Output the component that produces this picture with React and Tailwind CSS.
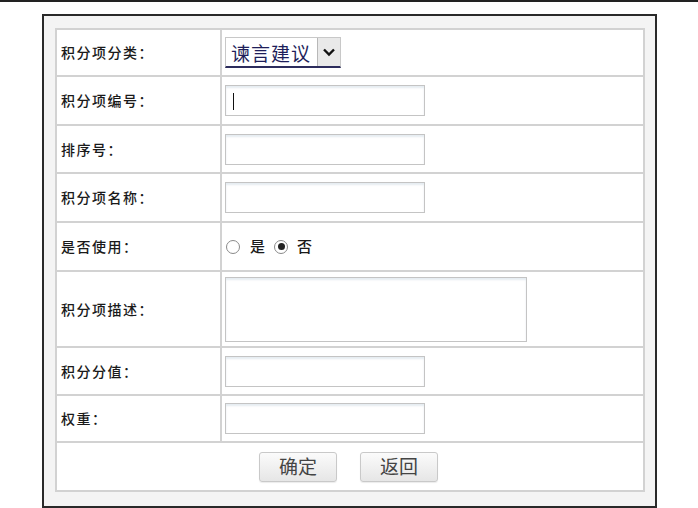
import React from "react";

const font = { fontFamily: '"Noto Sans CJK SC", "Noto Sans", sans-serif' };

function Input({ caret }) {
  return (
    <div className="relative w-[200px] h-[31px] border border-[#c4c4c4] bg-white shadow-[inset_0_2px_2px_rgba(150,180,200,0.25)]">
      {caret && <div className="absolute left-[7px] top-[7px] w-px h-[17px] bg-[#111]" />}
    </div>
  );
}

function Row({ label, h, children, last }) {
  return (
    <div className={`flex ${h} ${last ? "" : "border-b-2 border-[#d2d2d2]"}`}>
      <div className="w-[165px] shrink-0 flex items-center pl-[4px] border-r-2 border-[#d2d2d2] text-[14px] font-medium text-[#1a1a1a] tracking-[1.5px]">
        {label}
      </div>
      <div className="flex-1 flex items-center pl-[3px]">{children}</div>
    </div>
  );
}

function Radio({ checked }) {
  return (
    <div className="w-[14px] h-[14px] rounded-full border border-[#8a8a8a] bg-white flex items-center justify-center">
      {checked && <div className="w-[7px] h-[7px] rounded-full bg-[#222]" />}
    </div>
  );
}

function Btn({ children }) {
  return (
    <div className="w-[78px] h-[30px] rounded-[3px] border border-[#c9c9c9] bg-gradient-to-b from-[#fbfbfb] to-[#e6e6e6] flex items-center justify-center text-[19px] text-[#444] shadow-[0_1px_1px_rgba(0,0,0,0.08)]">
      {children}
    </div>
  );
}

export default function App() {
  return (
    <div className="w-[698px] h-[508px] bg-white relative overflow-hidden" style={font}>
      <div className="h-[2px] bg-[#222]" />
      <div className="ml-[42px] mt-[12px] w-[615px] h-[494px] border-2 border-[#2a2a2a] bg-[#f4f4f4] pl-[11px] pt-[12px]">
        <div className="w-[590px] border-2 border-[#d2d2d2] bg-white">
          <Row label="积分项分类：" h="h-[47px]">
            <div className="flex items-stretch h-[31px] w-[116px] border border-[#c8c8c8] border-b-[2px] border-b-[#2c2c5c] bg-white">
              <div className="flex-1 flex items-center pl-[5px] text-[19px] text-[#1e1e5a] tracking-[1px] leading-none">谏言建议</div>
              <div className="w-[23px] bg-[#e9e9e9] border-l border-[#b8b8b8] flex items-center justify-center">
                <svg width="14" height="10" viewBox="0 0 14 10">
                  <path d="M2 2.5 L7 7.5 L12 2.5" fill="none" stroke="#111" strokeWidth="2.4" />
                </svg>
              </div>
            </div>
          </Row>
          <Row label="积分项编号：" h="h-[49px]">
            <Input caret />
          </Row>
          <Row label="排序号：" h="h-[48px]">
            <Input />
          </Row>
          <Row label="积分项名称：" h="h-[49px]">
            <Input />
          </Row>
          <Row label="是否使用：" h="h-[49px]">
            <div className="flex items-center text-[15px] font-medium text-[#1a1a1a] pl-[1px]">
              <Radio />
              <span className="ml-[10px]">是</span>
              <span className="ml-[9px]"><Radio checked /></span>
              <span className="ml-[9px]">否</span>
            </div>
          </Row>
          <Row label="积分项描述：" h="h-[76px]">
            <div className="w-[302px] h-[65px] border border-[#c4c4c4] bg-white shadow-[inset_0_2px_2px_rgba(150,180,200,0.25)]" />
          </Row>
          <Row label="积分分值：" h="h-[48px]">
            <Input />
          </Row>
          <Row label="权重：" h="h-[47px]">
            <Input />
          </Row>
          <div className="h-[47px] flex items-center justify-center gap-[23px] pr-[3px]">
            <Btn>确定</Btn>
            <Btn>返回</Btn>
          </div>
        </div>
      </div>
    </div>
  );
}
